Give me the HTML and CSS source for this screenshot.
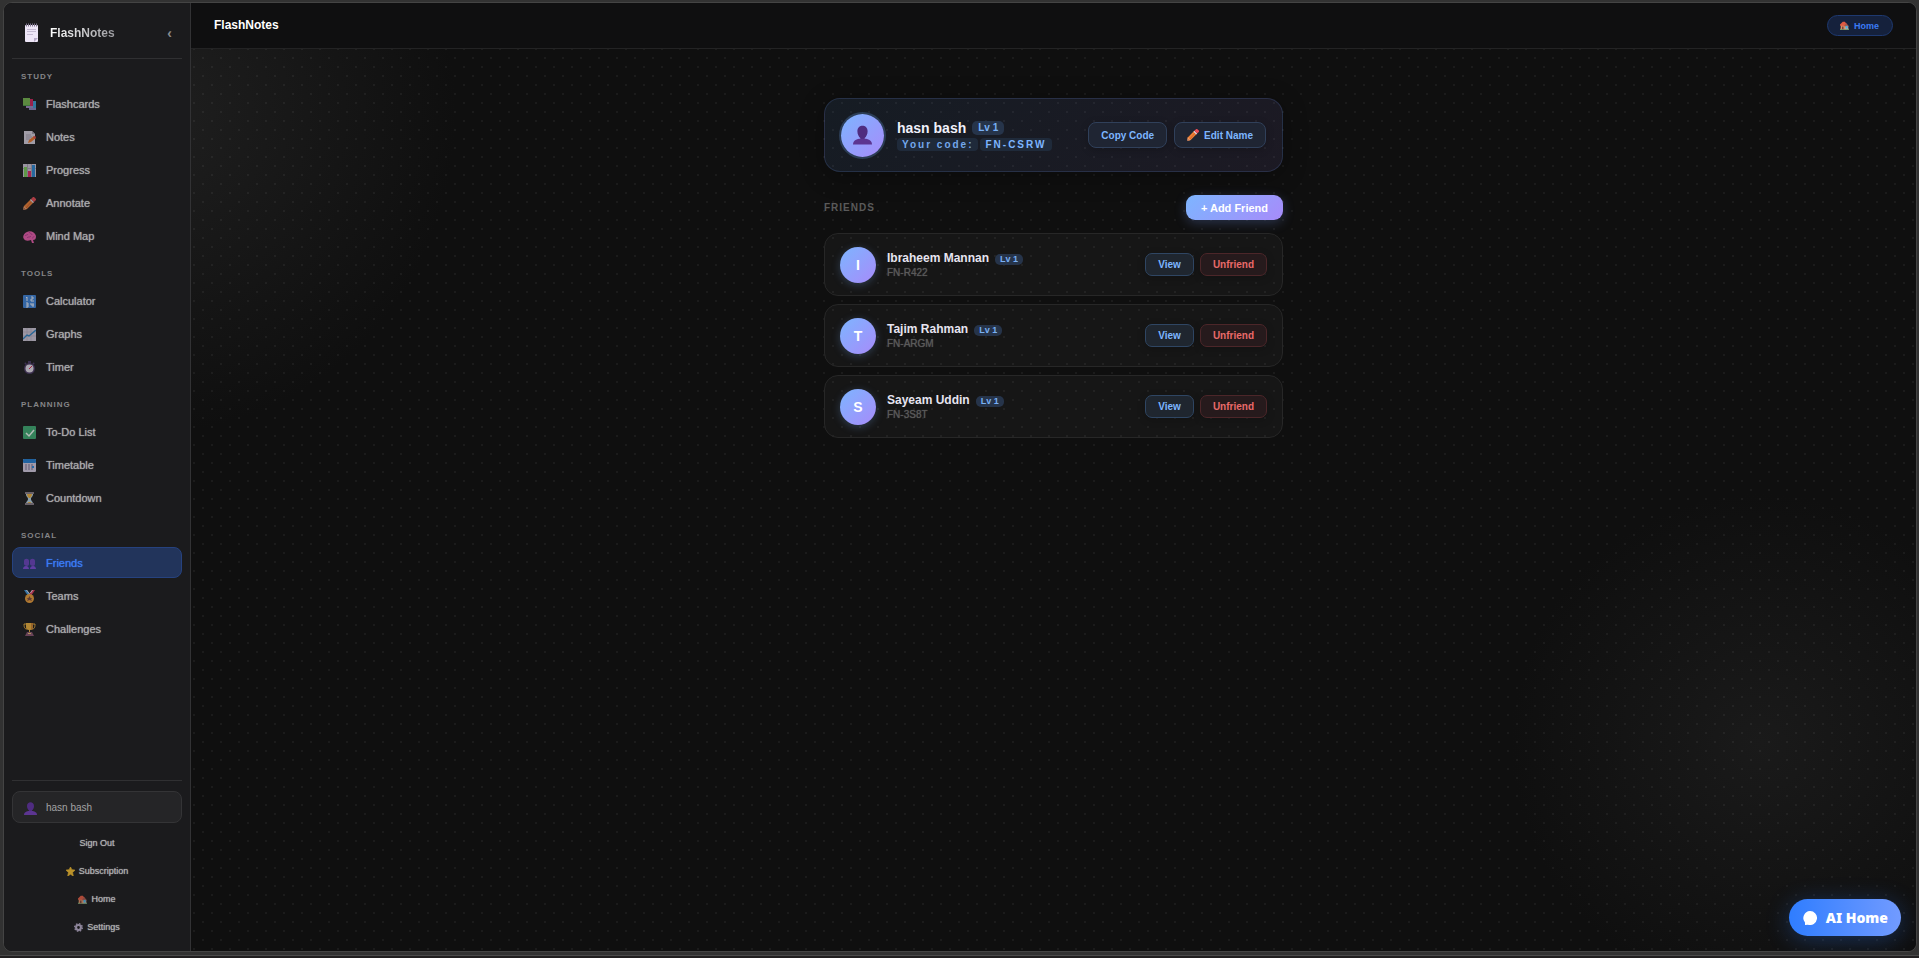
FILE: index.html
```html
<!DOCTYPE html>
<html lang="en">
    <head>
        <meta charset="utf-8">
        <title>FlashNotes</title>
        <link rel="stylesheet" href="styles.css">
    </head>
    <body>
        <!-- icon shapes, all on a 13x13 grid -->
        <svg class="sprite" aria-hidden="true">
            <symbol id="i-cards" viewBox="0 0 13 13">
                <rect x="6" y="3" width="7" height="9" fill="#3b9fd6"/><rect x="6" y="10" width="7" height="2" fill="#8d86c0"/>
                <rect x="3" y="1" width="7" height="9" fill="#d0245f"/><rect x="3" y="8" width="7" height="2" fill="#a08bc4"/>
                <rect x="0" y="0" width="7" height="8" fill="#77b84f"/><rect x="0" y="7" width="7" height="1" fill="#4f9a4a"/>
            </symbol>
            <symbol id="i-notes" viewBox="0 0 13 13">
                <path d="M1 0h8l3 3v10H1z" fill="#d9d3e0"/><path d="M9 0v3h3z" fill="#a49dae"/>
                <path d="M3 4h5M3 6h6M3 8h4" stroke="#a9a2b4" stroke-width="1"/>
                <path d="M5 12l1-3 5-4 2 2-5 4z" fill="#f07a2a"/><path d="M10 6l2-1 1 1-1 2z" fill="#e0484f"/>
            </symbol>
            <symbol id="i-chart" viewBox="0 0 13 13">
                <rect width="13" height="13" fill="#cfc8d8"/><path d="M4.500 0v13M8.500 0v13M0 4.500h13" stroke="#aaa3b5"/>
                <rect x="1" y="3" width="3" height="10" fill="#7ccf5a"/><rect x="5" y="7" width="3" height="6" fill="#e02a68"/><rect x="9" y="1" width="3" height="12" fill="#2c8ad8"/>
            </symbol>
            <symbol id="i-pencil" viewBox="0 0 13 13">
                <path d="M0 13l1-4 7-7 3 3-7 7z" fill="#ee8035"/><path d="M0 13l1-4 3 3z" fill="#f3a06a"/><path d="M0 13l1-2 1 1z" fill="#5a4450"/>
                <path d="M3 11l6-7" stroke="#d05f2c"/><path d="M7 3l1-1 3 3-1 1z" fill="#d9d3e4"/><path d="M8 2l2-2h1l2 2v1l-2 2z" fill="#ea4b55"/>
            </symbol>
            <symbol id="i-brain" viewBox="0 0 13 13">
                <path d="M1 9C-1 7 1 3 4 2c3-2 8 0 9 4 0 3-1 4-3 4l1 3H9L8 10C5 11 2 11 1 9z" fill="#ee5fb0"/>
                <path d="M2 6c1-2 2 0 3-2M6 2c1 2 3 1 3 3M4 8c1-2 3 0 4-2M9 8c1 0 2-1 2-2" fill="none" stroke="#b93f95"/>
            </symbol>
            <symbol id="i-numbers" viewBox="0 0 13 13">
                <rect width="13" height="13" rx="1" fill="#3f87de"/>
                <path d="M3 3l1-1v4M8 2h2v2H8v2h3M3 8h2v4H3M3 10h2M8 8v2h3M10 8v4" fill="none" stroke="#eef4ff"/>
            </symbol>
            <symbol id="i-graph" viewBox="0 0 13 13">
                <rect width="13" height="13" fill="#d3ccdc"/><path d="M0 4h13M0 8h13M4 0v13M8 0v13" stroke="#b4adbf" stroke-width=".6"/>
                <path d="M0 11l4-4 2 1 7-6" fill="none" stroke="#2f87c9" stroke-width="1.400"/>
            </symbol>
            <symbol id="i-timer" viewBox="0 0 13 13">
                <rect x="5" y="0" width="3" height="3" fill="#4b3a66"/><path d="M2 3l1-1M11 3l-1-1" stroke="#4b3a66" stroke-width="2"/>
                <circle cx="6.500" cy="7.500" r="5.500" fill="#4b3a66"/><circle cx="6.500" cy="7.500" r="4" fill="#e9e3ef"/>
                <path d="M6 8l3-3" stroke="#e02a50"/>
            </symbol>
            <symbol id="i-check" viewBox="0 0 13 13">
                <rect width="13" height="13" rx="1" fill="#3fae74"/><path d="M3 7l3 3 5-6" fill="none" stroke="#f3fff8" stroke-width="1.500"/>
            </symbol>
            <symbol id="i-calendar" viewBox="0 0 13 13">
                <rect width="13" height="13" rx="1" fill="#d9d1e6"/><rect width="13" height="4" rx="1" fill="#2381d6"/>
                <path d="M2 6h9M2 8h9M2 10h9" stroke="#7b7398" stroke-dasharray="2 1"/><rect x="9" y="7" width="2" height="2" fill="#2a8be0"/>
            </symbol>
            <symbol id="i-hourglass" viewBox="0 0 13 13">
                <path d="M3 2h7c0 3-2 3-2 5s2 2 2 5H3c0-3 2-3 2-5S3 5 3 2z" fill="#bcd9ea"/>
                <path d="M4 2h5c0 2-1 3-2 4H6C5 5 4 4 4 2zM4 12c0-1 1-2 2-2h1c1 0 2 1 2 2z" fill="#f2b23c"/>
                <path d="M2 0h9v2H2zM2 11h9v2H2z" fill="#8b7f88"/>
            </symbol>
            <symbol id="i-people" viewBox="0 0 13 13">
                <path d="M1 4c0-3 5-3 5 0v3c0 1-1 2-2 2S1 8 1 7zM7 4c0-3 5-3 5 0v3c0 1-1 2-2 2S7 8 7 7z" fill="#6a3aa8"/>
                <path d="M0 12c0-4 6-4 6 0zM7 12c0-4 6-4 6 0z" fill="#7b42c2"/>
            </symbol>
            <symbol id="i-person" viewBox="0 0 13 13">
                <path d="M3 4c0-5 7-5 7 0 0 2-1 4-2 4.500V10H5V8.500C4 8 3 6 3 4z" fill="#4f2c80"/>
                <path d="M0 13c0-3 3-4 5-4h3c2 0 5 1 5 4z" fill="#5c3591"/>
            </symbol>
            <symbol id="i-medal" viewBox="0 0 13 13">
                <path d="M1 0h3l3 4-2 2z" fill="#3f9ae0"/><path d="M12 0H9L6 4l2 2z" fill="#e23a62"/><path d="M3 0h1l3 4H6zM10 0H9L7 3h1z" fill="#f0eaf5"/>
                <circle cx="6.500" cy="8.500" r="4.500" fill="#f0a13a"/><path d="M6.500 6l1 2h2L8 9l1 2-2.500-1L4 11l1-2-1.500-1h2z" fill="#7d4a3d"/>
            </symbol>
            <symbol id="i-trophy" viewBox="0 0 13 13">
                <path d="M3 1H1c0 4 1 5 3 5M10 1h2c0 4-1 5-3 5" fill="none" stroke="#e9ad3a"/>
                <path d="M3 0h7v4c0 2-1 3-3 3v2H6V7C4 7 3 6 3 4z" fill="#f3b63e"/><path d="M8 0h2v4c0 2-1 3-2 3z" fill="#cf8530"/>
                <path d="M4 9h5l2 4H2z" fill="#8a5470"/><rect x="5" y="10" width="3" height="1" fill="#f0c878"/>
            </symbol>
            <symbol id="i-star" viewBox="0 0 13 13">
                <path d="M6.500 0l2 4 4.500.5-3.500 3.500 1 5-4-2.500-4 2.500 1-5L0 4.500 4.500 4z" fill="#efb92f" stroke="#efb92f" stroke-linejoin="round"/>
            </symbol>
            <symbol id="i-home" viewBox="0 0 13 13">
                <rect x="0" y="11" width="13" height="2" fill="#5f9a6c"/><path d="M1 5h7v7H1z" fill="#d98c62"/><path d="M7 7h5v5H7z" fill="#d8a08c"/>
                <path d="M0 5l4-4h3l3 4v2H0z" fill="#df5a42"/><path d="M6 7l3-4 4 5H7z" fill="#a8564c"/>
                <rect x="8" y="7" width="3" height="4" fill="#43b7e8"/><rect x="3" y="8" width="2" height="4" fill="#74423c"/>
            </symbol>
            <symbol id="i-gear" viewBox="0 0 13 13">
                <circle cx="6.500" cy="6.500" r="5.500" fill="none" stroke="#b5aac6" stroke-width="2" stroke-dasharray="2.200 2.100"/>
                <circle cx="6.500" cy="6.500" r="3.500" fill="none" stroke="#b5aac6" stroke-width="3"/>
            </symbol>
            <symbol id="i-notepad" viewBox="0 0 14 20">
                <rect x="0" y="2" width="13" height="17" rx="1" fill="#eee6f7"/><path d="M9 19v-4h4z" fill="#b8abc9"/>
                <path d="M1 2h12" stroke="#7d738c" stroke-width="3" stroke-dasharray="1 1"/>
                <path d="M2 6h9v1H2zM2 8h9v1H2zM2 11h6v1H2z" fill="#c4bad2"/>
            </symbol>
            <symbol id="i-chat" viewBox="0 0 14 14">
                <path d="M7 0a7 7 0 1 1-2 13.700L2 14v-2.500A7 7 0 0 1 7 0z" fill="#fff"/>
            </symbol>
        </svg>

        <div class="window">
            <aside class="sidebar">
                <div class="brand">
                    <svg class="brand-icon"><use href="#i-notepad"/></svg>
                    <span class="brand-name">FlashNotes</span>
                    <button class="collapse" aria-label="Collapse sidebar">‹</button>
                </div>
                <nav class="nav">
                    <h2>STUDY</h2>
                    <a href="#"><svg class="icon"><use href="#i-cards"/></svg><span>Flashcards</span></a>
                    <a href="#"><svg class="icon"><use href="#i-notes"/></svg><span>Notes</span></a>
                    <a href="#"><svg class="icon"><use href="#i-chart"/></svg><span>Progress</span></a>
                    <a href="#"><svg class="icon"><use href="#i-pencil"/></svg><span>Annotate</span></a>
                    <a href="#"><svg class="icon"><use href="#i-brain"/></svg><span>Mind Map</span></a>
                    <h2>TOOLS</h2>
                    <a href="#"><svg class="icon"><use href="#i-numbers"/></svg><span>Calculator</span></a>
                    <a href="#"><svg class="icon"><use href="#i-graph"/></svg><span>Graphs</span></a>
                    <a href="#"><svg class="icon"><use href="#i-timer"/></svg><span>Timer</span></a>
                    <h2>PLANNING</h2>
                    <a href="#"><svg class="icon"><use href="#i-check"/></svg><span>To-Do List</span></a>
                    <a href="#"><svg class="icon"><use href="#i-calendar"/></svg><span>Timetable</span></a>
                    <a href="#"><svg class="icon"><use href="#i-hourglass"/></svg><span>Countdown</span></a>
                    <h2>SOCIAL</h2>
                    <a href="#" class="active"><svg class="icon"><use href="#i-people"/></svg><span>Friends</span></a>
                    <a href="#"><svg class="icon"><use href="#i-medal"/></svg><span>Teams</span></a>
                    <a href="#"><svg class="icon"><use href="#i-trophy"/></svg><span>Challenges</span></a>
                </nav>
                <div class="side-foot">
                    <button class="user"><svg class="icon"><use href="#i-person"/></svg>hasn bash</button>
                    <button class="foot-link">Sign Out</button>
                    <a class="foot-link" href="#"><svg><use href="#i-star"/></svg>Subscription</a>
                    <a class="foot-link" href="#"><svg><use href="#i-home"/></svg>Home</a>
                    <a class="foot-link" href="#"><svg><use href="#i-gear"/></svg>Settings</a>
                </div>
            </aside>

            <div class="main">
                <header class="topbar">
                    <h1>FlashNotes</h1>
                    <a class="home-pill" href="#"><svg><use href="#i-home"/></svg>Home</a>
                </header>
                <main class="content">
                    <div class="column">
                        <section class="profile">
                            <div class="avatar big"><svg><use href="#i-person"/></svg></div>
                            <div class="who">
                                <div class="name-row"><span class="name">hasn bash</span><span class="level">Lv 1</span></div>
                                <div class="code-row"><span class="code">Your code:</span><span class="code bright">FN-CSRW</span></div>
                            </div>
                            <div class="actions">
                                <button class="btn">Copy Code</button>
                                <button class="btn"><svg><use href="#i-pencil"/></svg>Edit Name</button>
                            </div>
                        </section>

                        <div class="list-head">
                            <h2>FRIENDS</h2>
                            <button class="add">+ Add Friend</button>
                        </div>

                        <ul class="friends">
                            <li class="friend">
                                <div class="avatar">I</div>
                                <div class="who">
                                    <div class="name-row"><span class="name">Ibraheem Mannan</span><span class="level">Lv 1</span></div>
                                    <div class="friend-code">FN-R422</div>
                                </div>
                                <div class="actions">
                                    <button class="btn">View</button>
                                    <button class="btn danger">Unfriend</button>
                                </div>
                            </li>
                            <li class="friend">
                                <div class="avatar">T</div>
                                <div class="who">
                                    <div class="name-row"><span class="name">Tajim Rahman</span><span class="level">Lv 1</span></div>
                                    <div class="friend-code">FN-ARGM</div>
                                </div>
                                <div class="actions">
                                    <button class="btn">View</button>
                                    <button class="btn danger">Unfriend</button>
                                </div>
                            </li>
                            <li class="friend">
                                <div class="avatar">S</div>
                                <div class="who">
                                    <div class="name-row"><span class="name">Sayeam Uddin</span><span class="level">Lv 1</span></div>
                                    <div class="friend-code">FN-3S8T</div>
                                </div>
                                <div class="actions">
                                    <button class="btn">View</button>
                                    <button class="btn danger">Unfriend</button>
                                </div>
                            </li>
                        </ul>
                    </div>
                </main>
                <button class="ai-home"><svg><use href="#i-chat"/></svg>AI Home</button>
            </div>
        </div>
        <div class="edge"></div>
    </body>
</html>
```
FILE: styles.css
```css
* {
    box-sizing: border-box;
}
body {
    margin: 0;
    height: 100vh;
    display: flex;
    flex-direction: column;
    background: #323232;
    color: #fff;
    font-family: "Liberation Sans", Arial, sans-serif;
    font-size: 11px;
}
h1, h2, ul {
    margin: 0;
    padding: 0;
    list-style: none;
}
a {
    color: inherit;
    text-decoration: none;
}
button {
    font: inherit;
    color: inherit;
    border: none;
    background: none;
    padding: 0;
    cursor: pointer;
}
.sprite {
    position: absolute;
    width: 0;
    height: 0;
}
.window {
    flex: 1;
    min-height: 0;
    display: flex;
    margin: 2px 2px 3px 3px;
    border: 1px solid #444;
    border-radius: 9px;
    overflow: hidden;
    background: #0f0f0f;
}
.edge {
    height: 3px;
    border-top: 1px solid #4a4a4a;
    background: #211f20;
}

/* sidebar */
.sidebar {
    width: 187px;
    flex: none;
    display: flex;
    flex-direction: column;
    padding: 0 8px 10px;
    background: #1b1b1d;
    border-right: 1px solid #323234;
}
.brand {
    display: flex;
    align-items: center;
    height: 56px;
    padding: 4px 8px 0 13px;
    border-bottom: 1px solid #303032;
}
.brand-icon {
    width: 14px;
    height: 20px;
}
.brand-name {
    margin-left: 11px;
    font-size: 12px;
    font-weight: bold;
    line-height: 16px;
    background: linear-gradient(90deg, #fff, #9a9a9e);
    background-clip: text;
    -webkit-background-clip: text;
    color: transparent;
}
.collapse {
    margin-left: auto;
    padding: 0 2px;
    font-size: 14px;
    font-weight: bold;
    line-height: 16px;
    color: #8a8a8c;
}
.nav {
    flex: 1;
    display: flex;
    flex-direction: column;
    gap: 2px;
}
.nav h2 {
    padding: 16px 9px 5px;
    font-size: 8px;
    line-height: 9px;
    letter-spacing: 1px;
    color: #858587;
}
.nav h2:first-child {
    padding-top: 13px;
}
.nav a {
    display: flex;
    align-items: center;
    gap: 10px;
    height: 31px;
    padding: 0 10px;
    border: 1px solid transparent;
    border-radius: 8px;
    color: #a9a9ab;
    /* thickens the regular weight a little */
    text-shadow: 0 0 1px #a9a9ab;
}
.nav a.active {
    color: #3b7bf5;
    background: #22345b;
    border-color: #26427f;
    text-shadow: 0 0 1px #3b7bf5;
}
.icon {
    width: 13px;
    height: 13px;
    flex: none;
    margin-top: 2px;
    opacity: .7;
}
.side-foot {
    display: flex;
    flex-direction: column;
    padding-top: 10px;
    border-top: 1px solid #303032;
}
.user {
    display: flex;
    align-items: center;
    gap: 9px;
    height: 32px;
    margin-bottom: 6px;
    padding: 0 11px;
    border: 1px solid #343436;
    border-radius: 8px;
    background: #252527;
    color: #a2a2a4;
    font-size: 10px;
}
.user .icon {
    opacity: 1;
}
.foot-link {
    display: flex;
    align-items: center;
    justify-content: center;
    gap: 4px;
    height: 28px;
    color: #b0b0b2;
    font-size: 9px;
    text-shadow: 0 0 1px #b0b0b2;
}
.foot-link svg {
    width: 9px;
    height: 9px;
    opacity: .75;
}

/* main area */
.main {
    flex: 1;
    min-width: 0;
    display: flex;
    flex-direction: column;
    position: relative;
}
.topbar {
    display: flex;
    align-items: center;
    justify-content: space-between;
    height: 46px;
    padding: 0 23px;
    background: #0f0f10;
    border-bottom: 1px solid #232324;
}
.topbar h1 {
    font-size: 12px;
    line-height: 14px;
    padding-bottom: 1px;
}
.home-pill {
    display: flex;
    align-items: center;
    gap: 5px;
    height: 21px;
    padding: 0 13px 0 12px;
    border: 1px solid #1e3970;
    border-radius: 11px;
    background: #15213c;
    color: #3b7bf5;
    font-size: 9px;
    font-weight: bold;
}
.home-pill svg {
    width: 9px;
    height: 9px;
}
.content {
    flex: 1;
    padding: 49px 20px 0;
    background:
        radial-gradient(circle, rgba(255,255,255,.05) 1px, transparent 1px) 3px 0 / 18px 18px,
        radial-gradient(circle, rgba(255,255,255,.05) 1px, transparent 1px) -6px 9px / 18px 18px,
        radial-gradient(ellipse 300px 320px at -2% 7%, #1f1f1f, transparent),
        radial-gradient(ellipse 250px 250px at 91% 77%, #1a1a1a, transparent),
        #0f0f0f;
}
.column {
    max-width: 459px;
    margin: 0 auto;
}
.profile, .friend {
    display: flex;
    align-items: center;
    padding: 0 16px;
}
.profile {
    height: 74px;
    border: 1px solid rgba(120,160,255,.16);
    border-radius: 16px;
    background: linear-gradient(135deg, rgba(96,165,250,.09), rgba(167,139,250,.09));
    box-shadow: 0 4px 24px rgba(0,0,0,.3);
}
.avatar {
    display: flex;
    align-items: center;
    justify-content: center;
    flex: none;
    width: 36px;
    height: 36px;
    margin-right: 11px;
    border-radius: 50%;
    background: linear-gradient(135deg, #7db5ff, #a78bfa);
    box-shadow: 0 2px 8px rgba(125,181,255,.25);
    font-size: 14px;
    font-weight: bold;
}
.avatar.big {
    width: 43px;
    height: 43px;
    margin-right: 13px;
    box-shadow: 0 0 0 2px #2b3d55;
}
.avatar svg {
    width: 19px;
    height: 20px;
}
.who {
    flex: 1;
    min-width: 0;
}
.name-row {
    display: flex;
    align-items: center;
    gap: 6px;
}
.name {
    color: #e6e4f0;
    font-size: 12px;
    font-weight: bold;
    line-height: 16px;
}
.profile .name {
    color: #f0f0fa;
    font-size: 14px;
    line-height: 17px;
}
.level {
    padding: 0 5px;
    border-radius: 5px;
    background: #26344a;
    color: #79b0f5;
    font-size: 9px;
    font-weight: bold;
    line-height: 11px;
}
.friend .level {
    margin-top: 3px;
}
.profile .level {
    padding: 0 6px;
    font-size: 10px;
    line-height: 14px;
}
.code-row {
    display: flex;
    gap: 2px;
    margin-top: 1px;
}
.code {
    padding: 0 5px;
    border-radius: 4px;
    background: #1f2a3a;
    color: #74a8ec;
    font-size: 10px;
    font-weight: bold;
    line-height: 13px;
    letter-spacing: 2px;
}
.code.bright {
    color: #7db5ff;
}
.actions {
    display: flex;
    gap: 6px;
}
.btn {
    display: flex;
    align-items: center;
    gap: 4px;
    height: 23px;
    padding: 0 12px;
    border: 1px solid #2f4663;
    border-radius: 7px;
    background: #1f262f;
    color: #7db5ff;
    font-size: 10px;
    font-weight: bold;
    box-shadow: 0 2px 8px rgba(0,0,0,.2);
}
.profile .actions {
    gap: 7px;
}
.profile .btn {
    height: 26px;
    padding: 0 12px;
    border-color: #30405a;
    border-radius: 8px;
    background: #1f2533;
}
.profile .btn svg {
    width: 12px;
    height: 12px;
    margin-right: 1px;
}
.btn svg {
    width: 11px;
    height: 11px;
}
.btn.danger {
    border-color: #4c2629;
    background: #261a1c;
    color: #e96a6a;
}
.list-head {
    display: flex;
    align-items: center;
    justify-content: space-between;
    margin: 23px 0 13px;
}
.list-head h2 {
    color: #5a5a5a;
    font-size: 10px;
    letter-spacing: 1px;
}
.add {
    height: 25px;
    padding: 0 15px;
    border-radius: 9px;
    background: linear-gradient(135deg, #7db5ff, #a78bfa);
    color: #fff;
    font-weight: bold;
    box-shadow: 0 3px 12px rgba(125,160,255,.25);
}
.friends {
    display: flex;
    flex-direction: column;
    gap: 8px;
}
.friend {
    height: 63px;
    padding: 0 15px;
    border: 1px solid #272727;
    border-radius: 14px;
    background: rgba(255,255,255,.03);
}
.friend-code {
    color: #5a5a5a;
    font-size: 10px;
    line-height: 14px;
    text-shadow: 0 0 1px #5a5a5a;
}

/* floating button, over the page */
.ai-home {
    position: absolute;
    right: 15px;
    bottom: 15px;
    display: flex;
    align-items: center;
    gap: 9px;
    height: 37px;
    padding: 0 13px 0 14px;
    border-radius: 19px;
    background: linear-gradient(90deg, #2f7dff, #729bff);
    color: #fff;
    font-family: "Noto Sans", sans-serif;
    font-size: 14px;
    font-weight: 900;
    box-shadow: 0 4px 24px rgba(47,125,255,.3);
}
.ai-home svg {
    width: 14px;
    height: 14px;
}
```
